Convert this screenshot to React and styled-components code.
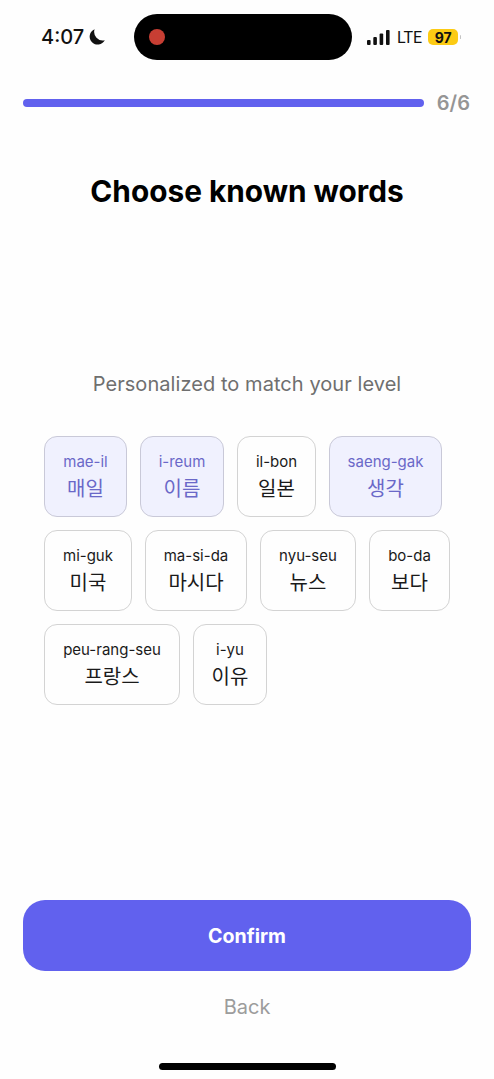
import React from 'react';
import styled, { createGlobalStyle } from 'styled-components';

const GlobalStyle = createGlobalStyle`
  html, body {
    margin: 0;
    padding: 0;
    background: #fefefe;
  }
  * {
    box-sizing: border-box;
  }
`;

const Page = styled.div`
  width: 494px;
  height: 1079px;
  overflow: hidden;
  display: flex;
  flex-direction: column;
  background: #fefefe;
  font-family: Inter, "Noto Sans CJK KR", sans-serif;
`;

const StatusBar = styled.div`
  height: 46px;
  margin-top: 14px;
  display: grid;
  grid-template-columns: 134px 218px 142px;
  align-items: center;
`;

const TimeGroup = styled.div`
  display: flex;
  align-items: center;
  gap: 5px;
  padding-left: 41px;
  font-size: 20px;
  font-weight: 500;
  color: #111;
`;

const Island = styled.div`
  height: 46px;
  border-radius: 23px;
  background: #000;
  display: flex;
  align-items: center;
  padding-left: 15px;
`;

const Camera = styled.div`
  width: 16px;
  height: 16px;
  border-radius: 50%;
  background: #c73e33;
`;

const StatusRight = styled.div`
  display: flex;
  align-items: center;
  padding-left: 15px;
  color: #111;
`;

const Lte = styled.span`
  font-family: Roboto, sans-serif;
  font-size: 16px;
  font-weight: 400;
  margin-left: 7px;
`;

const Battery = styled.span`
  position: relative;
  width: 30px;
  height: 16px;
  margin-left: 6px;
  border-radius: 5px;
  background: #fccb14;
  display: flex;
  align-items: center;
  justify-content: center;
  font-size: 14px;
  font-weight: 700;

  &::after {
    content: '';
    position: absolute;
    right: -3px;
    top: 6px;
    width: 1.5px;
    height: 4px;
    border-radius: 1px;
    background: #c4c4c4;
  }
`;

const ProgressRow = styled.div`
  margin-top: 39px;
  padding: 0 24px 0 23px;
  display: flex;
  align-items: center;
  gap: 13px;
`;

const ProgressTrack = styled.div`
  flex: 1;
  height: 8px;
  border-radius: 4px;
  background: #6161ee;
`;

const ProgressLabel = styled.span`
  font-size: 20px;
  line-height: 8px;
  font-weight: 600;
  color: #959595;
`;

const Title = styled.h1`
  margin: 66px 0 0;
  text-align: center;
  font-size: 29.8px;
  line-height: 36px;
  font-weight: 700;
  color: #000;
`;

const Subtitle = styled.p`
  margin: 163px 0 0;
  text-align: center;
  font-size: 20px;
  line-height: 24px;
  font-weight: 400;
  letter-spacing: 0.06px;
  color: #6f6f6f;
`;

const Chips = styled.div`
  margin-top: 40px;
  padding: 0 44px;
  display: flex;
  flex-wrap: wrap;
  gap: 13px;
`;

const Chip = styled.div`
  width: ${(p) => p.$width}px;
  height: 81px;
  padding-top: 1px;
  border: 1.5px solid ${(p) => (p.$selected ? '#c9c9d8' : '#d3d3d3')};
  border-radius: 13px;
  background: ${(p) => (p.$selected ? '#f0f1fe' : '#fefefe')};
  color: ${(p) => (p.$selected ? '#6a68c8' : '#1a1a1a')};
  display: flex;
  flex-direction: column;
  align-items: center;
  justify-content: center;
`;

const Roman = styled.span`
  font-size: 15px;
  line-height: 20px;
  white-space: nowrap;
`;

const Hangul = styled.span`
  margin-top: 4px;
  font-size: 20px;
  line-height: 26px;
  white-space: nowrap;
`;

const Footer = styled.div`
  margin-top: auto;
  padding: 0 23px 9px;
  display: flex;
  flex-direction: column;
  align-items: center;
`;

const ConfirmButton = styled.button`
  width: 100%;
  height: 71px;
  border: none;
  border-radius: 22px;
  background: #6161ee;
  color: #fff;
  font-family: inherit;
  font-size: 19.6px;
  font-weight: 700;
`;

const BackButton = styled.button`
  margin-top: 24px;
  padding: 0;
  border: none;
  background: none;
  color: #9c9c9c;
  font-family: inherit;
  font-size: 20px;
  line-height: 24px;
`;

const HomeBar = styled.div`
  width: 177px;
  height: 7px;
  margin-top: 44px;
  border-radius: 4px;
  background: #000;
`;

const words = [
  { roman: 'mae-il', hangul: '매일', width: 83, selected: true },
  { roman: 'i-reum', hangul: '이름', width: 84, selected: true },
  { roman: 'il-bon', hangul: '일본', width: 79 },
  { roman: 'saeng-gak', hangul: '생각', width: 113, selected: true },
  { roman: 'mi-guk', hangul: '미국', width: 88 },
  { roman: 'ma-si-da', hangul: '마시다', width: 102 },
  { roman: 'nyu-seu', hangul: '뉴스', width: 96 },
  { roman: 'bo-da', hangul: '보다', width: 81 },
  { roman: 'peu-rang-seu', hangul: '프랑스', width: 136 },
  { roman: 'i-yu', hangul: '이유', width: 74 },
];

const Moon = () => (
  <svg width="16" height="16" viewBox="0 0 16 16">
    <path d="M5.6 0.2A8 8 0 1 0 15.8 11.2A8.6 8.6 0 0 1 5.6 0.2Z" fill="#111" />
  </svg>
);

const Signal = () => (
  <svg width="23" height="15" viewBox="0 0 23 15">
    <rect x="0" y="10" width="3.6" height="5" rx="1" fill="#111" />
    <rect x="6.3" y="7" width="3.6" height="8" rx="1" fill="#111" />
    <rect x="12.6" y="3.5" width="3.6" height="11.5" rx="1" fill="#111" />
    <rect x="19" y="0" width="3.6" height="15" rx="1" fill="#111" />
  </svg>
);

const App = () => {
  return (
    <Page>
      <GlobalStyle />
      <StatusBar>
        <TimeGroup>
          4:07
          <Moon />
        </TimeGroup>
        <Island>
          <Camera />
        </Island>
        <StatusRight>
          <Signal />
          <Lte>LTE</Lte>
          <Battery>97</Battery>
        </StatusRight>
      </StatusBar>
      <ProgressRow>
        <ProgressTrack />
        <ProgressLabel>6/6</ProgressLabel>
      </ProgressRow>
      <Title>Choose known words</Title>
      <Subtitle>Personalized to match your level</Subtitle>
      <Chips>
        {words.map((w) => (
          <Chip key={w.roman} $selected={w.selected} $width={w.width}>
            <Roman>{w.roman}</Roman>
            <Hangul>{w.hangul}</Hangul>
          </Chip>
        ))}
      </Chips>
      <Footer>
        <ConfirmButton>Confirm</ConfirmButton>
        <BackButton>Back</BackButton>
        <HomeBar />
      </Footer>
    </Page>
  );
};

export default App;
